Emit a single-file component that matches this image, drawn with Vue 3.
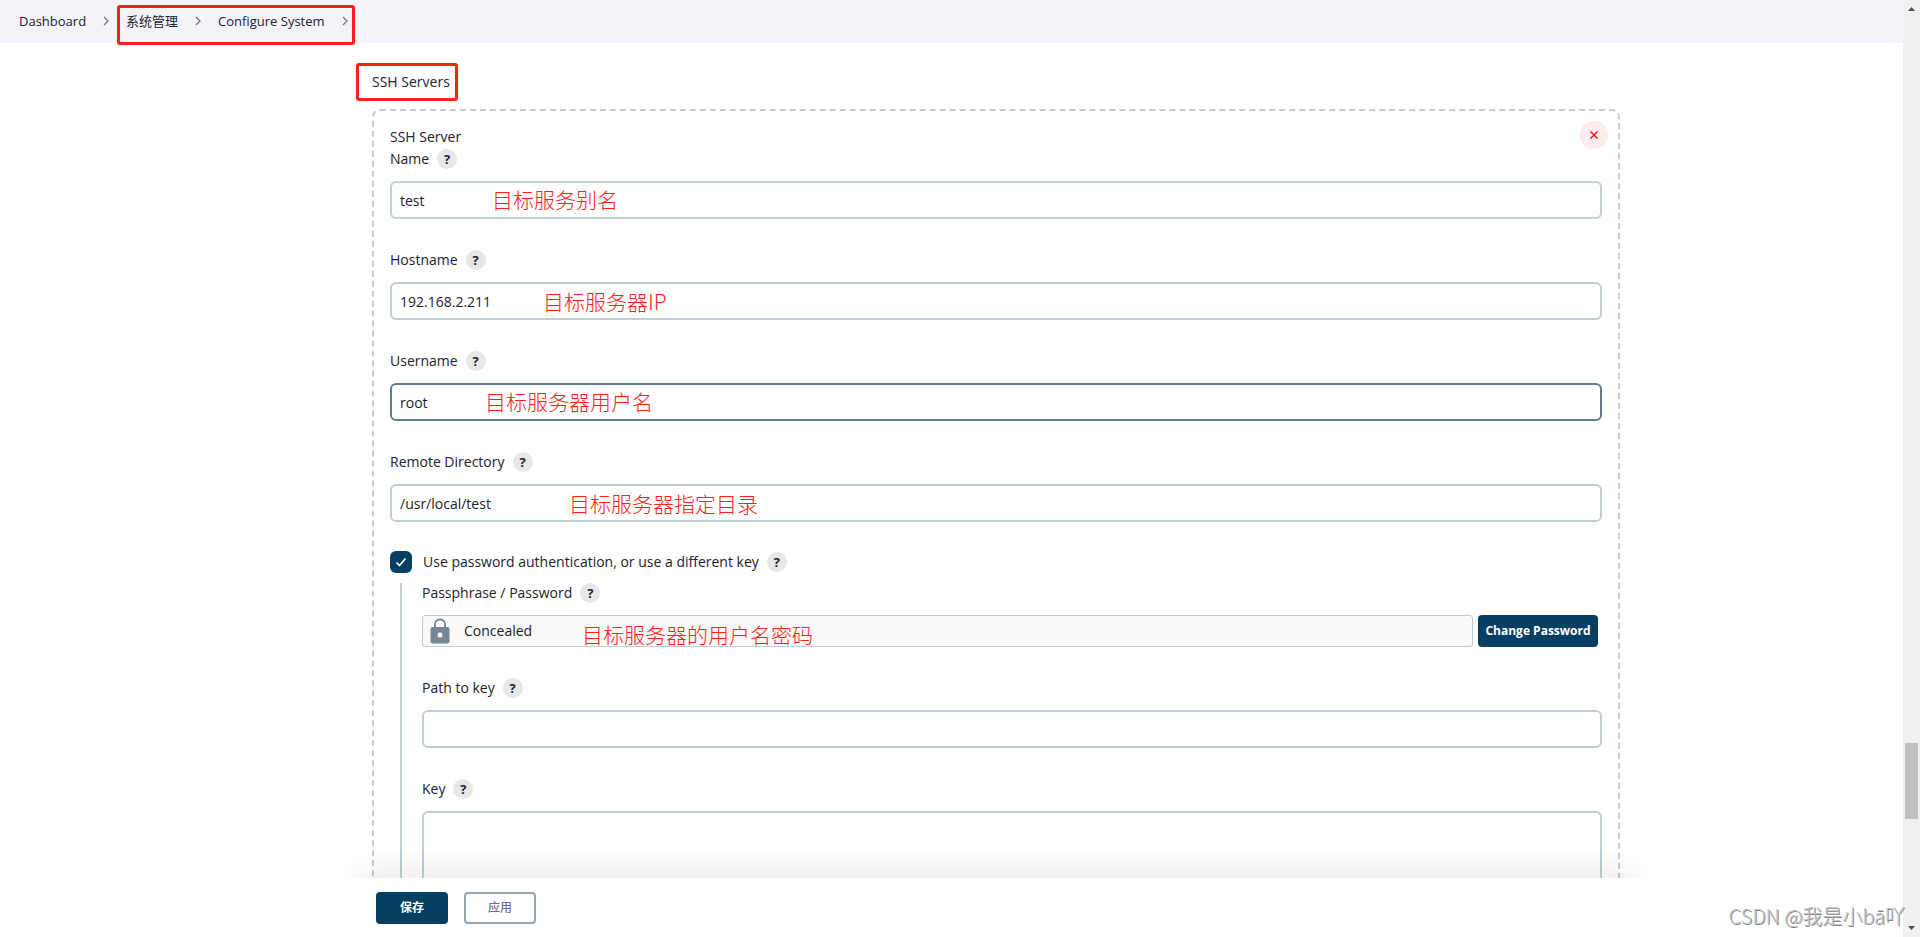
<script setup>
import { ref } from 'vue'

const fields = ref([
  { id: 'name', label: 'Name', value: 'test', note: '目标服务别名', noteClass: 'note-name' },
  { id: 'host', label: 'Hostname', value: '192.168.2.211', note: '目标服务器IP', noteClass: 'note-host' },
  { id: 'user', label: 'Username', value: 'root', note: '目标服务器用户名', noteClass: 'note-user', active: true },
  { id: 'dir', label: 'Remote Directory', value: '/usr/local/test', note: '目标服务器指定目录', noteClass: 'note-dir' },
])
const usePassword = ref(true)
const keyPath = ref('')
const keyText = ref('')
</script>

<template>
  <div class="window">
    <div class="page">
      <nav class="crumbs" aria-label="Breadcrumb">
        <a href="#">Dashboard</a>
        <svg class="chev" viewBox="0 0 6 10"><path d="M1 1l4 4-4 4" /></svg>
        <a href="#">系统管理</a>
        <svg class="chev" viewBox="0 0 6 10"><path d="M1 1l4 4-4 4" /></svg>
        <a href="#">Configure System</a>
        <svg class="chev" viewBox="0 0 6 10"><path d="M1 1l4 4-4 4" /></svg>
        <span class="mark mark-crumbs"></span>
      </nav>

      <main class="content">
        <h1 class="title">SSH Servers<span class="mark mark-title"></span></h1>

        <section class="server">
          <button class="remove" type="button" aria-label="Remove">
            <svg viewBox="0 0 8 8"><path d="M0.5 0.5l7 7M7.5 0.5l-7 7" /></svg>
          </button>
          <div class="caption">SSH Server</div>

          <div v-for="f in fields" :key="f.id" class="field">
            <div class="label-row">
              <label :for="f.id">{{ f.label }}</label>
              <button class="help" type="button">?</button>
            </div>
            <div class="box">
              <input :id="f.id" v-model="f.value" type="text" class="text" :class="{ active: f.active }" />
              <span class="note" :class="f.noteClass">{{ f.note }}</span>
            </div>
          </div>

          <div class="check-row">
            <span class="check">
              <input id="usepw" v-model="usePassword" type="checkbox" />
              <svg viewBox="0 0 22 22"><path d="M6.5 11.5l3 3 6-7" /></svg>
            </span>
            <label for="usepw">Use password authentication, or use a different key</label>
            <button class="help" type="button">?</button>
          </div>

          <div class="nested">
            <div class="field">
              <div class="label-row">
                <span>Passphrase / Password</span>
                <button class="help" type="button">?</button>
              </div>
              <div class="secret-row">
                <div class="secret">
                  <svg class="lock" viewBox="0 0 20 26">
                    <path class="shackle" d="M5 10V6.500a5 5 0 0 1 10 0V10" />
                    <rect x="0.500" y="9" width="19" height="16.500" rx="2" />
                    <circle cx="10" cy="17" r="2.500" />
                  </svg>
                  <span>Concealed</span>
                  <span class="note note-pass">目标服务器的用户名密码</span>
                </div>
                <button class="primary change" type="button">Change Password</button>
              </div>
            </div>

            <div class="field">
              <div class="label-row">
                <label for="path">Path to key</label>
                <button class="help" type="button">?</button>
              </div>
              <input id="path" v-model="keyPath" type="text" class="text" />
            </div>

            <div class="field">
              <div class="label-row">
                <label for="key">Key</label>
                <button class="help" type="button">?</button>
              </div>
              <textarea id="key" v-model="keyText" class="text area"></textarea>
            </div>
          </div>
        </section>
      </main>

      <footer class="footer">
        <div class="actions">
          <button class="primary" type="button">保存</button>
          <button class="secondary" type="button">应用</button>
        </div>
      </footer>
    </div>

    <div class="scroll" aria-hidden="true">
      <svg viewBox="0 0 7 4"><path d="M0 4L3.500 0 7 4z" /></svg>
      <span class="thumb"></span>
      <svg viewBox="0 0 7 4"><path d="M0 0L3.500 4 7 0z" /></svg>
    </div>
    <div class="watermark">CSDN @我是小bā吖</div>
  </div>
</template>

<style>
html,
body {
  margin: 0;
  background: #fff;
}
</style>

<style scoped>
.window {
  position: relative;
  display: grid;
  grid-template-columns: minmax(0, 1fr) 17px;
  height: 100vh;
  overflow: hidden;
  color: #22222c;
  font: 14px/20px "Open Sans", "Noto Sans CJK SC", sans-serif;
}
.window * {
  box-sizing: border-box;
}
button,
input,
textarea {
  font: inherit;
  color: inherit;
}
button {
  padding: 0;
  border: 0;
}
.page {
  display: flex;
  flex-direction: column;
  min-height: 0;
}
.crumbs {
  position: relative;
  z-index: 1;
  display: flex;
  flex: none;
  align-items: center;
  gap: 17px;
  height: 43px;
  padding: 0 19px 1px;
  background: #f4f3f9;
  font-size: 13px;
}
.crumbs a {
  color: inherit;
  text-decoration: none;
}
.chev {
  width: 6px;
  height: 10px;
  fill: none;
  stroke: #77777f;
  stroke-width: 1.3;
}
.mark {
  position: absolute;
  border: 3px solid #ff2116;
  border-radius: 3px;
}
.mark-crumbs {
  left: 117px;
  top: 5px;
  width: 238px;
  height: 40px;
}
.mark-title {
  left: -16px;
  top: -9px;
  width: 102px;
  height: 38px;
}
.content {
  flex: 1;
  min-height: 0;
  padding: 29px 283px 0 372px;
  overflow: hidden;
}
.title {
  position: relative;
  margin: 0 0 17px;
  font-size: 14px;
  font-weight: 400;
  line-height: 20px;
}
.server {
  position: relative;
  padding: 16px;
  border: 2px dashed #c3cdd1;
  border-radius: 8px;
}
.remove {
  position: absolute;
  top: 10px;
  right: 10px;
  display: grid;
  place-items: center;
  width: 28px;
  height: 28px;
  border-radius: 50%;
  background: #fdebed;
}
.remove svg {
  width: 8px;
  height: 8px;
  stroke: #e6001f;
  stroke-width: 1.3;
}
.caption {
  padding-bottom: 2px;
}
.field {
  margin-bottom: 31px;
}
.label-row {
  display: flex;
  align-items: center;
  gap: 8px;
  margin-bottom: 12px;
  height: 20px;
}
.help {
  width: 20px;
  height: 20px;
  border-radius: 50%;
  background: #e7e7e7;
  font-weight: 700;
  font-size: 13px;
  line-height: 20px;
}
.box {
  position: relative;
}
.text {
  display: block;
  width: 100%;
  height: 38px;
  padding: 0 8px;
  border: 2px solid #c3cdd1;
  border-radius: 6px;
  outline: 0;
  background: #fff;
}
.text.active {
  border-color: #607d8b;
}
.area {
  height: 120px;
  resize: none;
}
.note {
  position: absolute;
  color: #ff2116;
  font: 300 21px/28px "Noto Sans CJK SC", sans-serif;
  white-space: nowrap;
}
.note-name {
  left: 102px;
  top: 4px;
}
.note-host {
  left: 153px;
  top: 5px;
}
.note-user {
  left: 95px;
  top: 4px;
}
.note-dir {
  left: 179px;
  top: 5px;
}
.note-pass {
  left: 159px;
  top: 4px;
}
.check-row {
  display: flex;
  align-items: center;
  gap: 8px;
  height: 22px;
  margin-top: -2px;
}
.check {
  position: relative;
  width: 22px;
  height: 22px;
  margin-right: 3px;
}
.check input {
  display: block;
  width: 22px;
  height: 22px;
  margin: 0;
  appearance: none;
  border-radius: 6px;
  background: #073f62;
}
.check svg {
  position: absolute;
  inset: 0;
  fill: none;
  stroke: #fff;
  stroke-width: 1.6;
  pointer-events: none;
}
.nested {
  margin: 10px 0 0 10px;
  padding-left: 20px;
  border-left: 2px solid #c3cdd1;
}
.secret-row {
  display: flex;
  gap: 5px;
  padding-right: 4px;
}
.secret {
  position: relative;
  display: flex;
  flex: 1;
  align-items: center;
  gap: 14px;
  height: 32px;
  padding: 0 7px;
  border: 1px solid #c3cdd1;
  border-radius: 3px;
  background: #f9f9f9;
}
.lock {
  width: 20px;
  height: 26px;
  fill: #788797;
}
.lock .shackle {
  fill: none;
  stroke: #788797;
  stroke-width: 2;
}
.lock circle {
  fill: #fff;
}
.primary,
.secondary {
  width: 72px;
  height: 32px;
  border-radius: 4px;
  font-size: 12px;
  font-weight: 700;
}
.primary {
  background: #073f62;
  color: #fff;
}
.change {
  width: 120px;
}
.secondary {
  border: 2px solid #98a5af;
  background: #fff;
  color: #6f6d88;
  font-weight: 500;
}
.footer {
  flex: none;
  padding: 0 283px 0 372px;
}
.actions {
  position: relative;
  display: flex;
  gap: 16px;
  height: 59px;
  padding: 14px 4px;
  background: #fff;
}
.actions::before {
  content: "";
  position: absolute;
  left: -28px;
  right: -28px;
  bottom: 100%;
  height: 28px;
  background: linear-gradient(to top, rgba(0, 0, 0, 0.06), rgba(0, 0, 0, 0));
  mask-image: linear-gradient(to right, transparent, #000 40px, #000 calc(100% - 40px), transparent);
  pointer-events: none;
}
.scroll {
  display: flex;
  flex-direction: column;
  align-items: center;
  padding: 7px 0;
  background: #f0f0f0;
}
.scroll svg {
  width: 7px;
  height: 4px;
  fill: #4d4d4d;
}
.thumb {
  width: 13px;
  height: 76px;
  margin: auto 0 107px;
  background: #c1c1c1;
}
.watermark {
  position: absolute;
  right: 15px;
  bottom: 7px;
  color: #c4c4c4;
  font: 300 20px/28px "Noto Sans CJK SC", sans-serif;
  text-shadow: 1px 1px 0 #858585;
}
</style>
